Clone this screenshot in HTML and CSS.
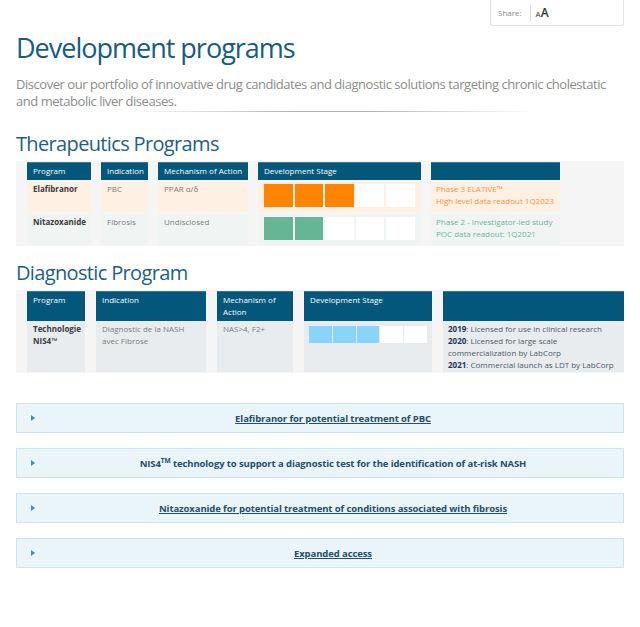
FILE: index.html
```html
<!DOCTYPE html>
<html>
<head>
<meta charset="utf-8">
<link rel="stylesheet" href="styles.css">
</head>
<body>
<div class="page">
  <div class="sharebar">
    <div class="share">
      <span class="share-label">Share:</span>
      <span class="share-sep"></span>
      <span class="fontsize"><span class="a-small">A</span><span class="a-big">A</span></span>
    </div>
  </div>

  <h1 class="title">Development programs</h1>
  <p class="intro">Discover our portfolio of innovative drug candidates and diagnostic solutions targeting chronic cholestatic and metabolic liver diseases.</p>
  <div class="divider"></div>

  <h2 class="section">Therapeutics Programs</h2>
  <div class="ptable ptable-ther">
    <div class="hcell">Program</div>
    <div class="hcell">Indication</div>
    <div class="hcell">Mechanism of Action</div>
    <div class="hcell">Development Stage</div>
    <div class="hcell"></div>

    <div class="cell orange name">Elafibranor</div>
    <div class="cell orange muted">PBC</div>
    <div class="cell orange muted">PPAR α/δ</div>
    <div class="cell orange stage"><span class="box on-orange"></span><span class="box on-orange"></span><span class="box on-orange"></span><span class="box"></span><span class="box"></span></div>
    <div class="cell orange status status-orange">Phase 3 ELATIVE™<br>High level data readout 1Q2023</div>

    <div class="cell green name">Nitazoxanide</div>
    <div class="cell green muted">Fibrosis</div>
    <div class="cell green muted">Undisclosed</div>
    <div class="cell green stage"><span class="box on-green"></span><span class="box on-green"></span><span class="box"></span><span class="box"></span><span class="box"></span></div>
    <div class="cell green status status-green">Phase 2 - Investigator-led study<br>POC data readout: 1Q2021</div>
  </div>

  <h2 class="section section-diag">Diagnostic Program</h2>
  <div class="ptable ptable-diag">
    <div class="hcell">Program</div>
    <div class="hcell">Indication</div>
    <div class="hcell">Mechanism of Action</div>
    <div class="hcell">Development Stage</div>
    <div class="hcell"></div>

    <div class="cell blue name">Technologie NIS4™</div>
    <div class="cell blue muted">Diagnostic de la NASH avec Fibrose</div>
    <div class="cell blue muted">NAS&gt;4, F2+</div>
    <div class="cell blue stage stage-small"><span class="box on-blue"></span><span class="box on-blue"></span><span class="box on-blue"></span><span class="box"></span><span class="box"></span></div>
    <div class="cell blue history">
      <div><b>2019</b>: Licensed for use in clinical research</div>
      <div><b>2020</b>: Licensed for large scale</div>
      <div>commercialization by LabCorp</div>
      <div><b>2021</b>: Commercial launch as LDT by LabCorp</div>
    </div>
  </div>

  <div class="accordions">
    <div class="acc"><span class="caret"></span><a class="acc-title" href="#">Elafibranor for potential treatment of PBC</a></div>
    <div class="acc"><span class="caret"></span><span class="acc-title plain">NIS4<sup>TM</sup> technology to support a diagnostic test for the identification of at-risk NASH</span></div>
    <div class="acc"><span class="caret"></span><a class="acc-title" href="#">Nitazoxanide for potential treatment of conditions associated with fibrosis</a></div>
    <div class="acc"><span class="caret"></span><a class="acc-title" href="#">Expanded access</a></div>
  </div>
</div>
</body>
</html>
```

FILE: styles.css
```css
* { box-sizing: border-box; }
html, body { margin: 0; padding: 0; background: #fff; }
body { font-family: "Open Sans", "Liberation Sans", sans-serif; color: #333; }

.page { padding: 0 16px; }

.sharebar { display: flex; justify-content: flex-end; }
.share {
  width: 134px; height: 26px;
  border: 1px solid #e2e2e2; border-top: none;
  border-radius: 0 0 3px 3px;
  display: flex; align-items: center;
  padding-left: 7px;
}
.share-label { font-size: 8px; color: #888; }
.share-sep { width: 1px; height: 16px; background: #ddd; margin: 0 5px 0 8px; }
.fontsize { color: #333; display: flex; align-items: baseline; }
.a-small { font-size: 8px; }
.a-big { font-size: 12px; font-weight: 600; }

.title {
  margin: 5px 0 0;
  font-size: 27px; font-weight: 400;
  color: #165b80; line-height: 34px;
  letter-spacing: -1px;
}
.intro {
  margin: 11px 0 0;
  font-size: 13px; line-height: 17px;
  color: #8c8c8c; font-weight: 400;
  letter-spacing: -0.46px;
}
.divider {
  height: 1px; margin: 1px 0 0 110px; width: 410px;
  background: linear-gradient(to right, rgba(0,0,0,0), #b5b5b5 40%, #b5b5b5 60%, rgba(0,0,0,0));
}

.section {
  margin: 18px 0 0;
  font-size: 20px; font-weight: 400; line-height: 28px;
  color: #1e5f83;
  letter-spacing: -0.65px;
}
.section-diag { margin-top: 13px; }

.ptable {
  display: grid;
  background: #f5f5f5;
  column-gap: 10px;
  padding: 1px 0 1px 11px;
  font-size: 8px; line-height: 12px;
  margin-top: 3px;
}
.ptable-ther {
  grid-template-columns: 64px 47px 90px 163px 129px;
  grid-template-rows: 18px 31px 32px;
  row-gap: 1px;
}
.ptable-ther .green { margin-top: 1px; }
.ptable-diag {
  grid-template-columns: 58px 110px 76px 128px 1fr;
  grid-template-rows: 30px 51px;
  row-gap: 0;
  column-gap: 11px;
}

.hcell {
  background: #02577b; color: #fff;
  padding: 2px 5px 3px 6px;
  font-size: 8px; line-height: 12px;
  border-top: 1px solid #3b7896;
}

.cell { padding: 2px 5px 2px 6px; }
.orange { background: #fef0e2; }
.green { background: #f0f5f3; }
.blue { background: #e8ecef; }
.name { font-weight: 700; color: #3a3a3a; }
.muted { color: #7c7c7c; }
.status { padding: 2px 3px 2px 5px; }
.status-orange { color: #f5953d; }
.status-green { color: #6fb497; }
.history { color: #4a5a6a; line-height: 12px; padding: 2px 4px 0 5px; }
.history b { color: #1f3554; font-weight: 700; }

.stage { display: flex; gap: 2px; padding: 3px 6px 5px; }
.stage-small { gap: 1px; padding: 5px 5px 0; }
.box { flex: 1; background: #fff; height: 23px; }
.stage-small .box { height: 17px; }
.on-orange { background: #ff8500; }
.on-green { background: #66b595; }
.on-blue { background: #88d4fb; }

.accordions {
  margin-top: 30px;
  display: flex; flex-direction: column; gap: 15px;
}
.acc {
  height: 30px;
  background: #e9f5f9;
  border: 1px solid #cbe5ef;
  display: flex; align-items: center;
  padding: 0 14px 0 14px;
}
.caret {
  width: 0; height: 0;
  border-left: 4px solid #3b8fc3;
  border-top: 3.5px solid transparent;
  border-bottom: 3.5px solid transparent;
  margin-right: 22px;
  flex: none;
}
.acc-title {
  flex: 1; text-align: center;
  font-size: 9.5px; font-weight: 700;
  color: #234e6c; text-decoration: underline;
  letter-spacing: -0.1px;
}
.acc-title.plain { text-decoration: none; }
.acc-title sup { font-size: 6.5px; line-height: 0; vertical-align: 4px; }
```
